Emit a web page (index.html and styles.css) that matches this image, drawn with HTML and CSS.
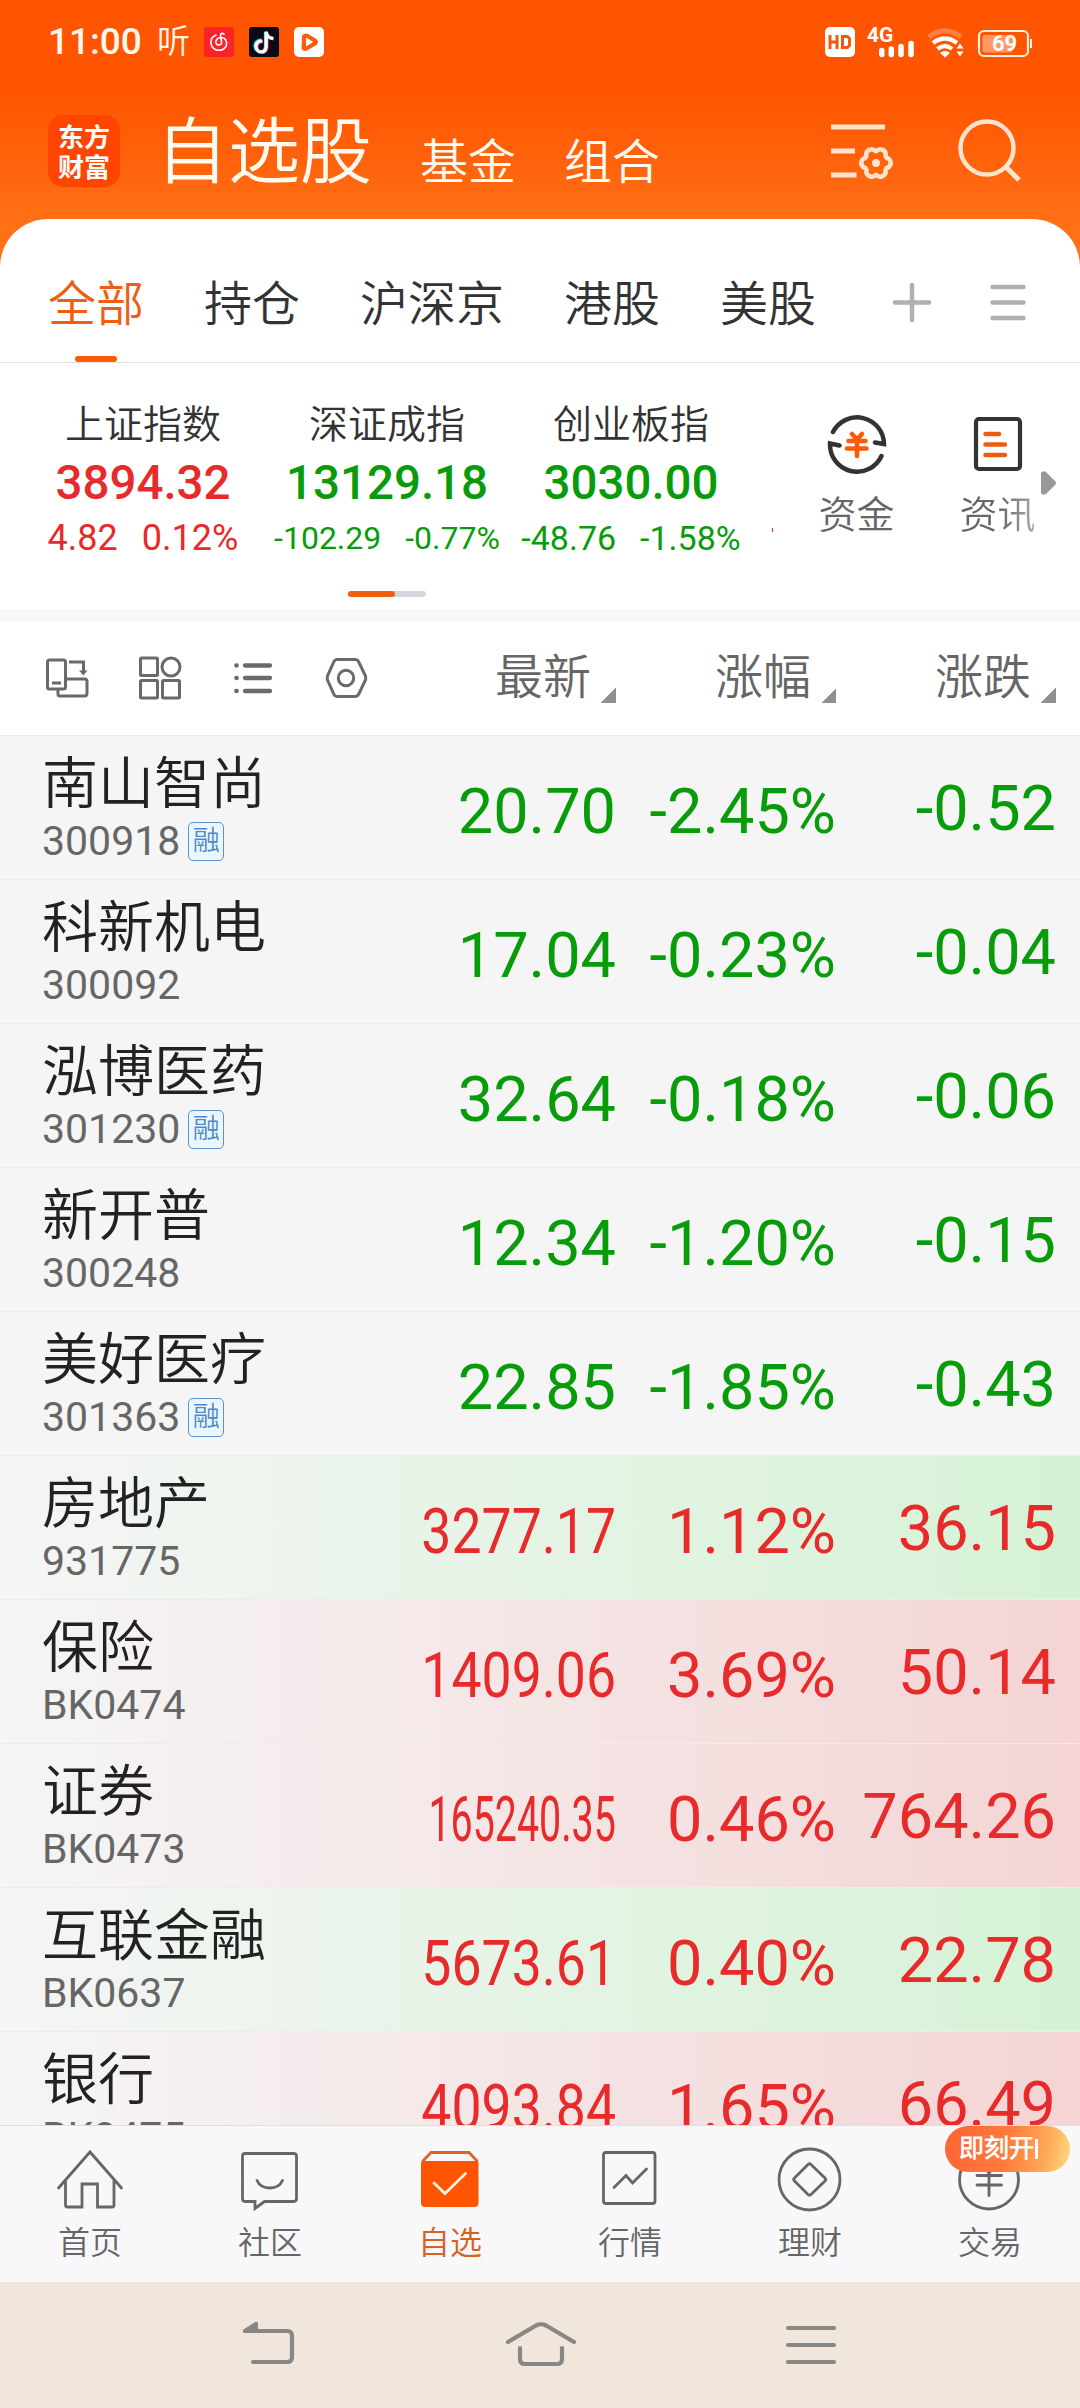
FILE: index.html
```html
<!DOCTYPE html>
<html lang="zh-CN">
<head>
<meta charset="utf-8">
<title>自选股</title>
<link rel="stylesheet" href="styles.css">
</head>
<body>
<div class="phone">
  <header class="top">
    <div class="status">
      <span class="clock">11:00</span>
      <span class="listen">听</span>
      <svg class="app" viewBox="0 0 30 30"><rect width="30" height="30" rx="3" fill="#fb2229"/><path d="M12 8C7 10 5.500 15 8 19.500C11 24.500 19 24.500 22 19.500C24 15 21.500 10.500 17 10.500C13.500 10.500 11.500 13 12 16C12.500 18.500 16.500 19 17.500 16C18.300 14 16 10 16.500 7.800C17 6 19 6 20 7.300" fill="none" stroke="#fff" stroke-width="1.600" stroke-linecap="round"/></svg>
      <svg class="app" viewBox="0 0 30 30"><rect width="30" height="30" rx="3" fill="#0b0b18"/><g fill="none" stroke-width="3.200"><path d="M12.500 13.200C8 13 6 16 6 18.800C6 22 8.500 24.500 11.500 24.500C14.500 24.500 16.500 22 16.500 19V5C17 8.500 19.500 10.800 23.500 11" stroke="#25e5e0"/><path d="M14 14.800C10 14.500 8 17 8 20C8 22.800 10 25.500 13 25.500C16 25.500 18 23 18 20V6C18.500 9.500 21 11.500 25 11.800" stroke="#f8315b"/><path d="M13.200 14C9 13.800 7 16.500 7 19.400C7 22.400 9.500 25 12.300 25C15.200 25 17.200 22.500 17.200 19.500V4.500C17.500 8.800 20.500 11.200 24.200 11.400" stroke="#fff"/></g></svg>
      <svg class="app" viewBox="0 0 30 30"><rect width="30" height="30" rx="5" fill="#fff"/><path d="M8 8.500Q11 5.500 14 7L22.500 12Q25.500 15 22.500 18L13 23.500Q9 25 7.500 21.500Z" fill="#fb5c0c"/><path d="M12 10.500L19.200 15L12 19.500Z" fill="#fff"/></svg>
      <span class="grow"></span>
      <svg class="sys" width="207" height="32" viewBox="825 26 207 32">
        <rect x="825" y="27" width="30" height="30" rx="5" fill="#fff"/>
        <path d="M830 35V49M837 35V49M830 42H837M842.500 36.500V47.500H847.500L849.500 45.500V38.500L847.500 36.500Z" fill="none" stroke="#ee5a12" stroke-width="3"/>
        <text x="867" y="42" class="gen">4G</text>
        <path d="M881.800 50.500V54.500M891.300 49V54.500M901 46.500V54.500M911 43.500V54.500" stroke="#fff" stroke-width="5.500" stroke-linecap="round"/>
        <path d="M929 37Q945 24.500 961 37" stroke="#ff8040" stroke-width="5" fill="none"/>
        <path d="M933 43Q945 34 957 43M937.500 49Q945 43 952 49" stroke="#fff" stroke-width="4.200" fill="none"/>
        <path d="M940 53Q945 49 950 53L945 57.500Z" fill="#fff"/>
        <path d="M956.500 48.500L960 43.500L963.500 48.500ZM956.500 51.500L960 56.500L963.500 51.500Z" fill="#fff"/>
        <rect x="979" y="31" width="49" height="25" rx="5" fill="none" stroke="#fff0e0" stroke-width="2.200"/>
        <rect x="982.500" y="35" width="30" height="17.500" rx="2" fill="#ff9866"/>
        <path d="M1031 39V48" stroke="#fff0e0" stroke-width="2"/>
        <text x="992" y="51" class="pct">69</text>
      </svg>
    </div>
    <div class="bar">
      <div class="logo"><span>东方</span><span>财富</span></div>
      <h1 class="title">自选股</h1>
      <span class="sub">基金</span>
      <span class="sub">组合</span>
      <span class="grow"></span>
      <svg class="tools" width="190" height="66" viewBox="831 118 190 66" fill="none" stroke="#ffe3cd">
        <path d="M831 127H885M831 151H855M831 175H856.500" stroke-width="5"/>
        <path d="M870.500 149.500Q872.500 148.500 876 151.300Q879.500 148.500 881.500 149.500Q886.500 151 885.500 155.500Q886 158 889 159Q892.500 162.500 889 167Q886 168 885.500 170Q886.500 175 881.500 176.500Q879.500 177.500 876 174.700Q872.500 177.500 870.500 176.500Q865.500 175 866.500 170Q866 168 863 167Q859.500 162.500 863 159Q866 158 866.500 155.500Q865.500 151 870.500 149.500Z" stroke-width="4.500" stroke-linejoin="round"/>
        <circle cx="876" cy="163" r="4" fill="#ffe3cd" stroke="none"/>
        <circle cx="987" cy="148" r="26.500" stroke-width="4.500"/>
        <path d="M1005.500 166.500L1019 180" stroke-width="5"/>
      </svg>
    </div>
  </header>

  <main class="sheet">
    <nav class="tabs">
      <span class="tab on">全部</span><span class="tab">持仓</span><span class="tab">沪深京</span><span class="tab">港股</span><span class="tab">美股</span>
      <span class="grow"></span>
      <svg width="134" height="42" viewBox="892 281 134 42" stroke="#b0b0b0" stroke-width="4.500" stroke-linecap="round"><path d="M895 302.500H929M912 285V320M992.500 287H1023.500M992.500 302.500H1023.500M992.500 318H1023.500"/></svg>
    </nav>

    <section class="market">
      <div class="quotes">
        <div class="index up"><span class="iname">上证指数</span><b>3894.32</b><p class="d36"><span>4.82</span><span>0.12%</span></p></div>
        <div class="index down"><span class="iname">深证成指</span><b>13129.18</b><p class="d32"><span>-102.29</span><span>-0.77%</span></p></div>
        <div class="index down"><span class="iname">创业板指</span><b>3030.00</b><p class="d34"><span>-48.76</span><span>-1.58%</span></p></div>
        <i class="peek"></i>
      </div>
      <div class="links">
        <div class="link">
          <svg width="60" height="60" viewBox="826 414 60 60" fill="none" stroke="#333" stroke-width="4.500" stroke-linecap="round"><path d="M832 432A27 27 0 0 1 883 444L874 442.500M880.500 456A27 27 0 0 1 829 443.500L838.500 445.500"/><path d="M851 434L856 439.500L861 434M847.500 441H864.500M846 448.500H865.500M856 440V456" stroke="#fd5a08"/></svg>
          <span>资金</span>
        </div>
        <div class="link">
          <svg width="60" height="60" viewBox="967 414 60 60" fill="none" stroke-linecap="round"><rect x="975" y="419" width="44" height="50" rx="3" stroke="#333" stroke-width="4.200"/><path d="M984.500 434H998M984.500 444.500H1004M984.500 455H1004" stroke="#ee5c14" stroke-width="4.500"/></svg>
          <span class="fade">资讯</span>
        </div>
        <svg class="next" width="15" height="24" viewBox="0 0 15 24"><path d="M0 2Q2-1 5 1L14 10Q16 12 14 14L5 23Q2 25 0 22Z" fill="#999"/></svg>
      </div>
    </section>
    <div class="pager"><i></i></div>

    <div class="columns">
      <svg class="views" width="324" height="44" viewBox="45 656 324 44" fill="none" stroke="#6a6a6a" stroke-width="3">
        <rect x="47.500" y="660" width="18" height="29" rx="2"/><path d="M52 683H61" stroke-width="3"/><path d="M69 662H83.500V673"/><path d="M79 670.500H87.500L83.300 675.500Z" fill="#6a6a6a" stroke="none"/><path d="M66 679H84.500Q87 679 87 681V693Q87 696 84.500 696H60Q58 696 58 694V689"/>
        <rect x="140.500" y="658" width="17" height="17.500" rx="1"/><circle cx="171" cy="667" r="9"/><rect x="140.500" y="680.500" width="17" height="17.500" rx="1"/><rect x="162.500" y="680.500" width="17" height="17.500" rx="1"/>
        <path d="M245 665.500H270M245 678H270M245 691H270M236.300 665.500H236.700M236.300 678H236.700M236.300 691H236.700" stroke-width="4.300" stroke-linecap="round"/>
        <path d="M337 659.500H355.500Q357.500 659.500 358.500 661.500L365.500 676Q366 678 365.500 680L358.500 694.500Q357.500 696.500 355.500 696.500H337Q335 696.500 334 694.500L327.500 680Q327 678 327.500 676L334 661.500Q335 659.500 337 659.500Z"/><circle cx="346" cy="678" r="7.700"/>
      </svg>
      <span class="col">最新<i></i></span><span class="col">涨幅<i></i></span><span class="col">涨跌<i></i></span>
    </div>

    <div class="list">
      <div class="row down"><div class="stock"><span class="name">南山智尚</span><span class="code">300918<em>融</em></span></div><span class="v">20.70</span><span class="v">-2.45%</span><span class="v last">-0.52</span></div>
      <div class="row down"><div class="stock"><span class="name">科新机电</span><span class="code">300092</span></div><span class="v">17.04</span><span class="v">-0.23%</span><span class="v last">-0.04</span></div>
      <div class="row down"><div class="stock"><span class="name">泓博医药</span><span class="code">301230<em>融</em></span></div><span class="v">32.64</span><span class="v">-0.18%</span><span class="v last">-0.06</span></div>
      <div class="row down"><div class="stock"><span class="name">新开普</span><span class="code">300248</span></div><span class="v">12.34</span><span class="v">-1.20%</span><span class="v last">-0.15</span></div>
      <div class="row down"><div class="stock"><span class="name">美好医疗</span><span class="code">301363<em>融</em></span></div><span class="v">22.85</span><span class="v">-1.85%</span><span class="v last">-0.43</span></div>
      <div class="row up flash-g"><div class="stock"><span class="name">房地产</span><span class="code">931775</span></div><span class="v c7">3277.17</span><span class="v">1.12%</span><span class="v last">36.15</span></div>
      <div class="row up flash-r"><div class="stock"><span class="name">保险</span><span class="code">BK0474</span></div><span class="v c7">1409.06</span><span class="v">3.69%</span><span class="v last">50.14</span></div>
      <div class="row up flash-r"><div class="stock"><span class="name">证券</span><span class="code">BK0473</span></div><span class="v c9">165240.35</span><span class="v">0.46%</span><span class="v last">764.26</span></div>
      <div class="row up flash-g"><div class="stock"><span class="name">互联金融</span><span class="code">BK0637</span></div><span class="v c7">5673.61</span><span class="v">0.40%</span><span class="v last">22.78</span></div>
      <div class="row up flash-r"><div class="stock"><span class="name">银行</span><span class="code">BK0475</span></div><span class="v c7">4093.84</span><span class="v">1.65%</span><span class="v last">66.49</span></div>
    </div>
  </main>

  <nav class="dock">
    <div class="item"><svg viewBox="56 2146 68 68"><path d="M58.500 2188L90 2152L121.500 2188M65.500 2181V2205Q65.500 2207 67.500 2207H82V2184H97.500V2207H112Q114 2207 114 2205V2181"/></svg><span>首页</span></div>
    <div class="item"><svg viewBox="236 2146 68 68"><path d="M245 2153.500H293.500Q296.500 2153.500 296.500 2156V2198.500Q296.500 2201.500 293.500 2201.500H264.500L255 2208.500V2201.500H245Q242.500 2201.500 242.500 2198.500V2156Q242.500 2153.500 245 2153.500ZM257 2180.500C261.500 2190.500 278 2190.500 282.500 2180.500"/></svg><span>社区</span></div>
    <div class="item on"><svg viewBox="416 2146 68 68"><path d="M423 2161L431 2152.500H469L477 2161" stroke="#dd6426"/><path d="M421 2163Q421 2161 423 2161H476Q478.500 2161 478.500 2163V2203Q478.500 2207 474.500 2207H425Q421 2207 421 2203Z" fill="#ff5400" stroke="none"/><path d="M434 2183L445 2193.500L465.500 2173.500" stroke="#fff3e6"/></svg><span>自选</span></div>
    <div class="item"><svg viewBox="596 2146 68 68"><rect x="603.500" y="2152.500" width="51.500" height="51" rx="2.500"/><path d="M614 2187.500L626 2175.500L632.500 2183L646.500 2169"/></svg><span>行情</span></div>
    <div class="item"><svg viewBox="776 2146 68 68"><circle cx="809.500" cy="2179.500" r="30.500"/><path d="M808 2164.500Q809.500 2163 811 2164.500L825 2178Q826.500 2179.500 825 2181L811 2194.500Q809.500 2196 808 2194.500L794.500 2181Q793 2179.500 794.500 2178Z"/></svg><span>理财</span></div>
    <div class="item trade"><svg viewBox="956 2146 68 68"><circle cx="989" cy="2179.500" r="29.500"/><path d="M980 2163L989 2173L998 2163M977 2175.500H1001.500M977 2185H1001.500M989 2173V2195.500"/></svg><span>交易</span><div class="promo">即刻开<i></i></div></div>
  </nav>

  <footer class="keys">
    <svg width="1080" height="60" viewBox="0 2314 1080 60" fill="none" stroke="#888783" stroke-width="4.200" stroke-linecap="round" stroke-linejoin="round">
      <path d="M245 2331H287Q292 2331 292 2336V2357Q292 2362 287 2362H253"/><path d="M245 2331L256 2324V2331Z" fill="#888783"/>
      <path d="M508 2342L536 2325.500Q541 2323 546 2325.500L574 2342M520 2348V2359Q520 2364 525 2364H557Q562 2364 562 2359V2348"/>
      <path d="M788 2328H834M788 2345H834M788 2362H834"/>
    </svg>
  </footer>
</div>
</body>
</html>
```
FILE: styles.css
```css
* { box-sizing: border-box; }
body { margin: 0; }
.phone {
  display: flex; flex-direction: column;
  width: 1080px; height: 2408px; overflow: hidden;
  font-family: Roboto, "Noto Sans CJK SC DemiLight", "Noto Sans CJK SC", sans-serif;
  font-weight: 350; color: #333;
}
.grow { flex: 1; }
svg { display: block; flex: none; }

/* header */
.top { height: 267px; margin-bottom: -48px; background: linear-gradient(#ff5500 95px, #ff7017 225px); }
.status { display: flex; align-items: center; height: 84px; padding: 0 48px; color: #fff8ee; }
.clock { width: 109px; font-size: 37px; font-weight: 500; line-height: 40px; }
.listen { width: 47px; font-size: 33px; line-height: 32px; }
.app { width: 30px; height: 30px; margin-right: 15px; }
.gen { font: 700 21px Roboto, sans-serif; fill: #fff; }
.pct { font: 700 22px Roboto, sans-serif; fill: #fff; }
.bar { display: flex; height: 135px; padding: 0 59px 0 48px; color: #fffaf0; }
.logo {
  display: flex; flex-direction: column; align-items: center; justify-content: center;
  width: 72px; height: 72px; margin: 31px 36px 0 0;
  border-radius: 15px; background: #ff4500; color: #fff;
  font: 700 26px/30px "Noto Sans CJK SC", sans-serif;
}
.title { margin: 23px 48px 0 0; font-size: 72px; line-height: 92px; font-weight: 350; }
.sub { margin: 49px 48px 0 0; font-size: 48px; line-height: 60px; }
.tools { margin-top: 34px; }

/* white sheet */
.sheet { flex: 1; min-height: 0; border-radius: 48px 48px 0 0; background: #fff; overflow: hidden; }
.tabs {
  display: flex; align-items: center; gap: 60px;
  height: 144px; padding: 25px 54px 0 48px;
  border-bottom: 1px solid #e2e2e2; font-size: 48px;
}
.tabs .grow { margin-right: -60px; }
.tabs svg { margin-bottom: 2px; }
.tab { position: relative; padding-top: 3px; line-height: 115px; white-space: nowrap; }
.tab.on { color: #f05c12; }
.tab.on::after {
  content: ""; position: absolute; left: 27px; bottom: 0;
  width: 42px; height: 6px; border-radius: 3px; background: #fd5a08;
}
.market { display: flex; height: 228px; padding-top: 38px; }
.quotes { display: flex; width: 774px; padding-left: 21px; overflow: hidden; }
.index { display: flex; flex-direction: column; align-items: center; flex: none; width: 244px; }
.iname { font-size: 39px; line-height: 48px; color: #333; }
.index b { font-size: 47.500px; font-weight: 500; line-height: 56px; margin-top: 6px; }
.index p { display: flex; align-items: baseline; gap: 24px; margin: 7px 0 0; line-height: 40px; font-weight: 400; }
.d36 { font-size: 36px; }
.d34 { font-size: 34px; }
.d32 { font-size: 32px; }
.up { color: #e82a2a; }
.down { color: #089c0a; }
.peek { width: 1px; height: 4px; margin: 127px 0 0 19px; background: #d33; }
.links { display: flex; padding: 13px 0 0 12px; }
.link { display: flex; flex-direction: column; align-items: center; width: 141px; }
.link span { margin-top: 17px; font-size: 38px; line-height: 48px; color: #666; }
.link .fade { color: transparent; background: linear-gradient(90deg, #666 50%, #aaa); background-clip: text; -webkit-background-clip: text; }
.next { margin: 57px 0 0 -27px; }
.pager { width: 78px; height: 6px; margin-left: 348px; border-radius: 3px; background: #d3d7db; }
.pager i { display: block; width: 47px; height: 6px; border-radius: 3px; background: #f25d14; }

/* column heads */
.columns {
  display: flex; align-items: center; height: 126px; margin-top: 12px; padding: 12px 24px 0 45px;
  background: linear-gradient(#f7f8fa 12px, #fff 12px); font-size: 48px; color: #666;
}
.views { margin-right: -93px; }
.col { display: flex; align-items: center; justify-content: flex-end; width: 220px; line-height: 60px; }
.views + .col { width: 340px; }
.col i { width: 15px; height: 15px; margin: 35px 0 0 10px; background: linear-gradient(135deg, transparent 50%, #8f8f94 50%); }

/* stock rows */
.row {
  display: grid; grid-template-columns: 354px 220px 220px 220px;
  height: 144px; padding-left: 42px; border-top: 1px solid #ececec; background: #f5f5f5;
}
.flash-g { background: linear-gradient(90deg, #f5f5f5, #d5f2d5); }
.flash-r { background: linear-gradient(90deg, #f5f5f5, #f5ecec 30%, #f4d4d4); }
.stock { display: flex; flex-direction: column; padding-top: 13px; }
.name { font-size: 56px; line-height: 70px; color: #222; }
.code { display: flex; align-items: center; font-size: 41px; line-height: 44px; font-weight: 400; color: #666; }
.code em {
  width: 36px; height: 39px; margin-left: 8px; border: 1.500px solid #5b94cc; border-radius: 5px;
  background: #edf5fc; color: #4a8bd0; text-align: center;
  font: 350 27px/36px Roboto, "Noto Sans CJK SC DemiLight", "Noto Sans CJK SC", sans-serif;
}
.v { justify-self: end; padding-top: 39px; font-size: 63px; line-height: 74px; font-weight: 400; transform-origin: right; }
.last { padding-top: 36px; }
.c7 { transform: scaleX(.85); }
.c9 { transform: scaleX(.625); }

/* bottom dock */
.dock { display: flex; height: 157px; border-top: 1px solid #dedee2; background: #f8f8fa; }
.item { display: flex; flex-direction: column; align-items: center; width: 180px; padding-top: 20px; font-size: 32px; line-height: 40px; color: #666; }
.item svg { width: 68px; height: 68px; fill: none; stroke: #666; stroke-width: 2.800; stroke-linecap: round; }
.item span { margin-top: 9px; }
.item.on { color: #d8601f; }
.trade { position: relative; }
.promo {
  position: absolute; left: 45px; top: 0; width: 125px; height: 46px; padding-left: 14px;
  display: flex; align-items: center; border-radius: 23px;
  background: linear-gradient(100deg, #ff6234, #ff7c3c 50%, #ffa958 80%, #ffdc80);
  color: #fff; font-size: 25px; font-weight: 900;
}
.promo i { width: 3px; height: 20px; margin-left: 1px; background: #fff; }

.keys { height: 126px; padding-top: 32px; background: #f0e6dc; }
```
